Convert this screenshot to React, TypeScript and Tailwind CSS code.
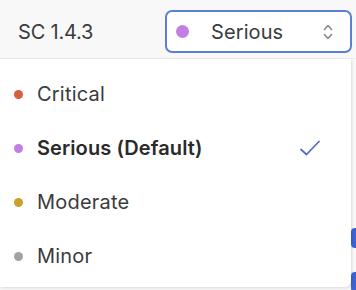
const options = [
  { label: "Critical", dot: "bg-[#d4603e]", selected: false },
  { label: "Serious (Default)", dot: "bg-[#c27ee2]", selected: true },
  { label: "Moderate", dot: "bg-[#c9a12c]", selected: false },
  { label: "Minor", dot: "bg-[#a3a3a3]", selected: false },
];

const App = () => {
  return (
    <div
      className="relative w-[356px] h-[290px] overflow-hidden bg-[#f8f8f8] text-[#3b3b3b]"
      style={{ fontFamily: "Inter, 'Noto Sans', sans-serif" }}
    >
      {/* blue control peeking out behind the menu */}
      <div className="absolute right-0 top-[228px] w-[5px] h-[20px] rounded-l bg-[#3d63d8]" />
      <div className="absolute right-0 top-[272px] w-[5px] h-[20px] rounded-l bg-[#3d63d8]" />

      <div className="flex items-start h-[59px] pl-[18px] pr-[4px] pt-[10px] border-b border-[#ececec]">
        <span className="mt-[9px] text-[20px] leading-[26px] tracking-[-0.2px]">SC 1.4.3</span>
        <div className="ml-auto flex items-center w-[187px] h-[43px] rounded-[7px] border-2 border-[#5b7fd6] bg-white pl-[9px] pr-[16px]">
          <span className="w-[13px] h-[13px] rounded-full bg-[#c27ee2]" />
          <span className="ml-[22px] text-[20px] tracking-[0.1px]">Serious</span>
          <svg
            className="ml-auto"
            width="12"
            height="20"
            viewBox="0 0 12 20"
            fill="none"
            stroke="#8a8a8a"
            strokeWidth="1.6"
            strokeLinecap="round"
            strokeLinejoin="round"
          >
            <path d="M2.5 7.5 6 3.5l3.5 4" />
            <path d="M2.5 12.5 6 16.5l3.5-4" />
          </svg>
        </div>
      </div>

      <div className="absolute left-0 top-[59px] w-[351px] h-[228px] bg-white rounded-br-md shadow-[1px_1px_3px_rgba(0,0,0,0.12)] flex flex-col pt-[8px]">
        {options.map((o) => (
          <div key={o.label} className="flex items-center h-[54px] pl-[14px] pr-[30px]">
            <span className={`w-[9px] h-[9px] rounded-full ${o.dot}`} />
            <span
              className={`ml-[14px] text-[20px] ${o.selected ? "font-semibold text-[#2a2a2a] tracking-[0.1px]" : "tracking-[0.2px]"}`}
            >
              {o.label}
            </span>
            {o.selected && (
              <svg
                className="ml-auto"
                width="22"
                height="18"
                viewBox="0 0 22 18"
                fill="none"
                stroke="#5a6cc4"
                strokeWidth="1.8"
                strokeLinecap="round"
                strokeLinejoin="round"
              >
                <path d="M2 10.5 7.5 15.5 20 2.5" />
              </svg>
            )}
          </div>
        ))}
      </div>
    </div>
  );
};

export default App;
